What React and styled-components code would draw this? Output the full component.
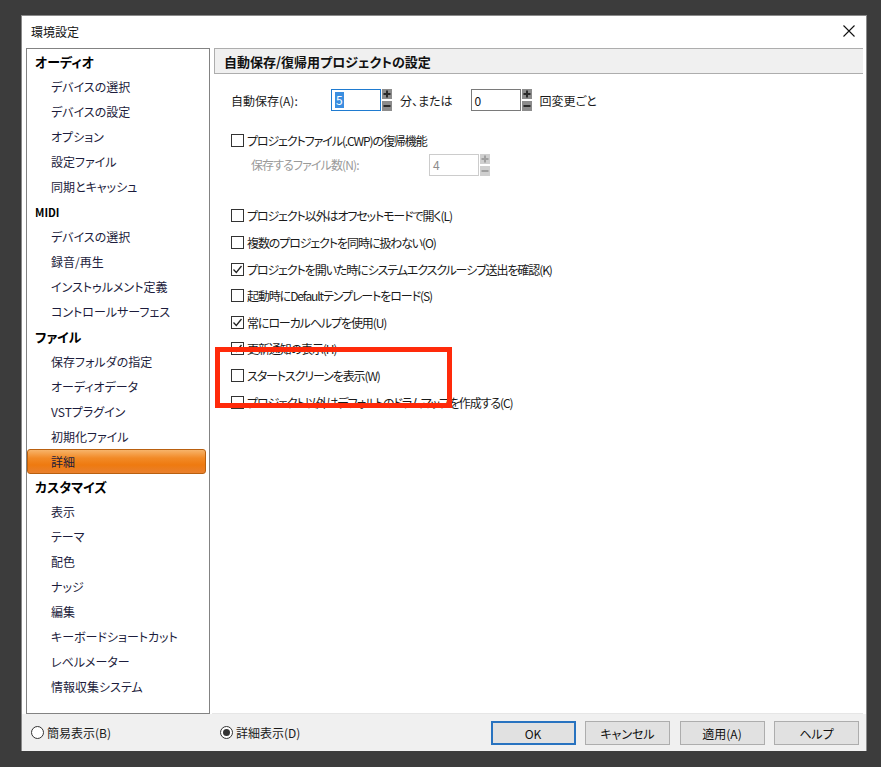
import React from 'react'
import styled, { createGlobalStyle } from 'styled-components'

const GlobalStyle = createGlobalStyle`
    html, body {
        margin: 0;
        padding: 0;
        background: #3c3c3c;
    }
    body {
        font-family: "Noto Sans CJK JP", "Noto Sans", sans-serif;
        font-size: 12px;
        font-feature-settings: "palt";
        color: #1a1a1a;
    }
`;

const sidebar = [
    { title: 'オーディオ', items: ['デバイスの選択', 'デバイスの設定', 'オプション', '設定ファイル', '同期とキャッシュ'] },
    { title: 'MIDI', items: ['デバイスの選択', '録音/再生', 'インストゥルメント定義', 'コントロールサーフェス'] },
    { title: 'ファイル', items: ['保存フォルダの指定', 'オーディオデータ', 'VSTプラグイン', '初期化ファイル', '詳細'] },
    { title: 'カスタマイズ', items: ['表示', 'テーマ', '配色', 'ナッジ', '編集', 'キーボードショートカット', 'レベルメーター', '情報収集システム'] },
];

const options = [
    { label: 'プロジェクト以外はオフセットモードで開く(L)', checked: false },
    { label: '複数のプロジェクトを同時に扱わない(O)', checked: false },
    { label: 'プロジェクトを開いた時にシステムエクスクルーシブ送出を確認(K)', checked: true },
    { label: '起動時にDefaultテンプレートをロード(S)', checked: false },
    { label: '常にローカルヘルプを使用(U)', checked: true },
    { label: '更新通知の表示(H)', checked: true },
    { label: 'スタートスクリーンを表示(W)', checked: false },
    { label: 'プロジェクト以外はデフォルトのドラムマップを作成する(C)', checked: false },
];

function Spinner({ disabled }) {
    const bg = disabled ? '#cfcfcf' : '#8c8c8c';
    const fg = disabled ? '#a0a0a0' : '#2a2a2a';
    return (
        <SpinBox>
            <svg width="10" height="22" viewBox="0 0 10 22">
                <rect x="0" y="0" width="10" height="10" fill={bg} />
                <rect x="0" y="12" width="10" height="10" fill={bg} />
                <path d="M1.5 5h7M5 1.5v7" stroke={fg} strokeWidth="2" />
                <path d="M1.5 17h7" stroke={fg} strokeWidth="2" />
            </svg>
        </SpinBox>
    )
}

function CheckBox({ checked }) {
    return (
        <Box>
            {checked && (
                <svg width="11" height="11" viewBox="0 0 11 11">
                    <path d="M1.5 5.5l2.8 3L9.5 2" fill="none" stroke="#222" strokeWidth="1.3" />
                </svg>
            )}
        </Box>
    )
}

function App() {
    return (
        <>
            <GlobalStyle />
            <Dialog>
                <TitleBar>
                    <Title>環境設定</Title>
                    <CloseButton>
                        <svg width="12" height="12" viewBox="0 0 12 12">
                            <path d="M0.5 0.5l11 11M11.5 0.5l-11 11" stroke="#111" strokeWidth="1.1" />
                        </svg>
                    </CloseButton>
                </TitleBar>

                <Body>
                    <Sidebar>
                        {sidebar.map(group => (
                            <React.Fragment key={group.title}>
                                <GroupTitle small={group.title === 'MIDI'}>{group.title}</GroupTitle>
                                {group.items.map(item => (
                                    <NavItem key={item} selected={item === '詳細'}>{item}</NavItem>
                                ))}
                            </React.Fragment>
                        ))}
                    </Sidebar>

                    <Main>
                        <SectionHeader>自動保存/復帰用プロジェクトの設定</SectionHeader>
                        <Form>
                            <FieldRow>
                                <FieldLabel>自動保存(A):</FieldLabel>
                                <Input focused><Selected>5</Selected></Input>
                                <Spinner />
                                <Unit>分、または</Unit>
                                <Input>0</Input>
                                <Spinner />
                                <Unit>回変更ごと</Unit>
                            </FieldRow>

                            <CheckRow style={{ marginTop: 16 }}>
                                <CheckBox />
                                <CheckLabel>プロジェクトファイル(.CWP)の復帰機能</CheckLabel>
                            </CheckRow>
                            <FieldRow indent>
                                <FieldLabel disabled wide>保存するファイル数(N):</FieldLabel>
                                <Input disabled>4</Input>
                                <Spinner disabled />
                            </FieldRow>

                            <CheckList>
                                {options.map(opt => (
                                    <CheckRow key={opt.label}>
                                        <CheckBox checked={opt.checked} />
                                        <CheckLabel>{opt.label}</CheckLabel>
                                    </CheckRow>
                                ))}
                            </CheckList>
                        </Form>
                    </Main>
                </Body>

                <Footer>
                    <RadioOption>
                        <Radio />
                        <span>簡易表示(B)</span>
                    </RadioOption>
                    <RadioOption>
                        <Radio checked />
                        <span>詳細表示(D)</span>
                    </RadioOption>
                    <Buttons>
                        <Button primary>OK</Button>
                        <Button>キャンセル</Button>
                        <Button>適用(A)</Button>
                        <Button>ヘルプ</Button>
                    </Buttons>
                </Footer>

                <Highlight />
            </Dialog>
        </>
    )
}

const Dialog = styled.div`
    position: relative;
    margin: 16px 0 0 22px;
    width: 844px;
    height: 735px;
    background: #ffffff;
    display: flex;
    flex-direction: column;
    box-shadow: 0 0 0 1px #8a8a8a;
`;

const TitleBar = styled.div`
    height: 30px;
    display: flex;
    align-items: center;
    justify-content: space-between;
    padding: 0 9px 0 9px;
`;

const Title = styled.div`
    font-size: 12px;
    color: #111;
`;

const CloseButton = styled.div`
    display: flex;
    align-items: center;
    justify-content: center;
    width: 16px;
    height: 16px;
`;

const Body = styled.div`
    height: 666px;
    padding: 2px 3px 0 4px;
    display: flex;
    gap: 2px;
`;

const Sidebar = styled.div`
    width: 184px;
    box-sizing: border-box;
    border: 1px solid #838383;
    background: #fff;
`;

const GroupTitle = styled.div`
    height: 25px;
    display: flex;
    align-items: center;
    padding-left: 8px;
    font-weight: 700;
    font-size: ${props => props.small ? '11px' : '13px'};
    color: #000;
`;

const NavItem = styled.div`
    height: 25px;
    display: flex;
    align-items: center;
    padding-left: 23px;
    margin-right: 3px;
    box-sizing: border-box;
    color: #1c1c3c;
    border-radius: ${props => props.selected ? '3px' : '0'};
    border: ${props => props.selected ? '1px solid #b9600f' : '1px solid transparent'};
    background: ${props => props.selected
        ? 'linear-gradient(to bottom, #f7b46a 0%, #f28a26 35%, #ee7a10 65%, #e9802e 100%)'
        : 'transparent'};
`;

const Main = styled.div`
    flex: 1;
    display: flex;
    flex-direction: column;
    background: #fff;
    border-bottom: 1px solid #e6e6e6;
`;

const SectionHeader = styled.div`
    height: 26px;
    box-sizing: border-box;
    margin-left: 2px;
    display: flex;
    align-items: center;
    padding-left: 9px;
    background: #f0f0f0;
    border: 1px solid #adadad;
    border-right: none;
    font-weight: 700;
    font-size: 13px;
    color: #111;
`;

const Form = styled.div`
    display: flex;
    flex-direction: column;
    padding: 15px 0 0 19px;
`;

const FieldRow = styled.div`
    height: 22px;
    display: flex;
    align-items: center;
    padding-left: ${props => props.indent ? '20px' : '0'};
`;

const FieldLabel = styled.span`
    width: ${props => props.wide ? '178px' : '100px'};
    color: ${props => props.disabled ? '#9a9a9a' : '#1a1a1a'};
    letter-spacing: ${props => props.wide ? '-0.9px' : '0'};
`;

const Input = styled.div`
    width: 50px;
    height: 22px;
    box-sizing: border-box;
    display: flex;
    align-items: center;
    padding-left: 3px;
    background: #fff;
    border: 1px solid ${props => props.focused ? '#1f7bd0' : props.disabled ? '#cccccc' : '#7a7a7a'};
    color: ${props => props.disabled ? '#8d8d8d' : '#111'};
`;

const Selected = styled.span`
    background: #3b8ee0;
    color: #fff;
    padding: 0 1px;
    line-height: 16px;
`;

const SpinBox = styled.div`
    margin-left: 1px;
    display: flex;
`;

const Unit = styled.span`
    margin: 0 18px 0 8px;
`;

const CheckList = styled.div`
    margin-top: 27px;
    display: flex;
    flex-direction: column;
`;

const CheckRow = styled.div`
    height: 26.6px;
    display: flex;
    align-items: center;
    gap: 3px;
    color: #1a1a1a;
`;

const CheckLabel = styled.span`
    letter-spacing: -1.1px;
`;

const Box = styled.div`
    width: 13px;
    height: 13px;
    box-sizing: border-box;
    border: 1px solid #333;
    background: #fff;
    display: flex;
    align-items: center;
    justify-content: center;
`;

const Footer = styled.div`
    height: 37px;
    background: #f0f0f0;
    display: flex;
    align-items: center;
    padding: 0 7px 0 9px;
`;

const RadioOption = styled.label`
    display: flex;
    align-items: center;
    gap: 3px;
    width: 189px;
    color: #1a1a1a;
`;

const Radio = styled.span`
    width: 13px;
    height: 13px;
    box-sizing: border-box;
    border-radius: 50%;
    border: 1px solid #333;
    background: #fff;
    display: flex;
    align-items: center;
    justify-content: center;

    &::after {
        content: '';
        display: ${props => props.checked ? 'block' : 'none'};
        width: 7px;
        height: 7px;
        border-radius: 50%;
        background: #333;
    }
`;

const Buttons = styled.div`
    margin-left: auto;
    display: flex;
    gap: 9.5px;
    padding-top: 1px;
`;

const Button = styled.div`
    width: 85px;
    height: 24px;
    box-sizing: border-box;
    display: flex;
    align-items: center;
    justify-content: center;
    background: #e1e1e1;
    border: ${props => props.primary ? '2px solid #2873c0' : '1px solid #adadad'};
    color: #111;
`;

const Highlight = styled.div`
    position: absolute;
    left: 193px;
    top: 331px;
    width: 237px;
    height: 61px;
    box-sizing: border-box;
    border: 5px solid #ff2a0a;
    pointer-events: none;
`;

export default App
